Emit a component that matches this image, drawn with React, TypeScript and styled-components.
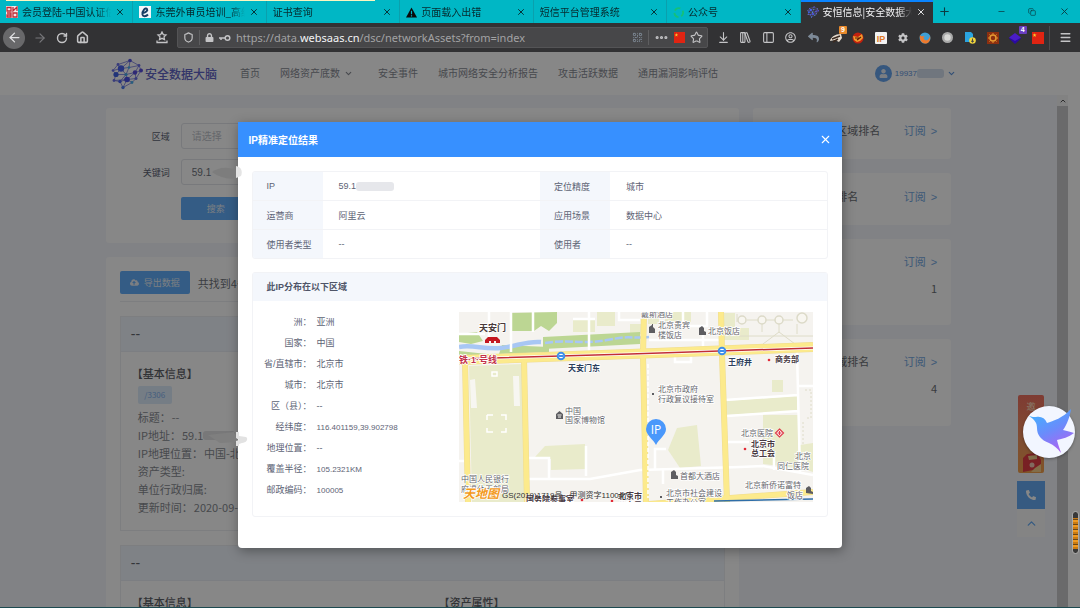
import React from "react";
import styled, { createGlobalStyle, css } from "styled-components";
import {
  ArrowLeft,
  ArrowRight,
  RotateCw,
  ArrowDownToLine,
  LibraryBig,
  PanelLeft,
  Menu,
  Star,
  Shield,
  X,
  Plus,
  Minus,
  Copy,
  ChevronDown,
  ChevronUp,
  House,
  QrCode,
  Ellipsis,
} from "lucide-react";
import {
  FaLock,
  FaPhoneAlt,
  FaCog,
  FaCloudUploadAlt,
  FaRegUserCircle,
  FaReply,
  FaUser,
} from "react-icons/fa";

const sans = `"Liberation Sans", "Noto Sans CJK SC", sans-serif`;
const cjk = `"Noto Sans CJK SC", sans-serif`;

const GlobalStyle = createGlobalStyle`
  * { box-sizing: border-box; }
  body { margin: 0; font-family: ${sans}; overflow: hidden; }
  button, input { font-family: inherit; }
  button { border: 0; padding: 0; background: none; color: inherit; cursor: pointer; }
  a { color: inherit; text-decoration: none; }
  svg { display: block; flex: none; }
`;

const Window = styled.div`
  display: flex;
  flex-direction: column;
  height: 100vh;
  overflow: hidden;
  border-bottom: 1px solid #1d4a50;
`;

/* ---------- browser chrome ---------- */

const TabStrip = styled.div`
  position: relative;
  display: grid;
  grid-template-columns: 1fr 147px;
  height: 23px;
  flex: none;
  background: #00b7c5;
`;

const NoticeEdge = styled.div`
  position: absolute;
  top: 0;
  left: 6px;
  width: 369px;
  height: 1px;
  background: #fbf6c0;
`;

const TabList = styled.div`
  display: flex;
`;

const Tab = styled.div<{ $active?: boolean }>`
  flex: 1;
  min-width: 0;
  display: flex;
  align-items: center;
  gap: 4px;
  padding: 1px 7px 0 6px;
  font: 10px/20px ${cjk};
  color: #06282c;
  border-right: 1px solid #0aa0ad;
  ${(p) =>
    p.$active &&
    css`
      background: #323234;
      color: #f2f2f4;
      border-right: 0;
      box-shadow: inset 0 2px 0 #0a84ff;
    `}
`;

const TabTitle = styled.span`
  flex: 1;
  min-width: 0;
  overflow: hidden;
  white-space: nowrap;
  mask-image: linear-gradient(90deg, #000 84%, transparent);
`;

const WindowButtons = styled.div`
  display: flex;
  align-items: center;
  justify-content: space-between;
  padding: 0 10px 0 5px;
  color: #0b3c42;
`;

const Toolbar = styled.div`
  display: flex;
  align-items: center;
  height: 29px;
  flex: none;
  background: #323234;
  color: #c4c4c6;
`;

const NavButtons = styled.div`
  display: flex;
  align-items: center;
  justify-content: space-between;
  width: 89px;
  padding-left: 3px;
`;

const BackButton = styled.button`
  display: grid;
  place-items: center;
  width: 22px;
  height: 22px;
  border-radius: 50%;
  background: #68686a;
  color: #e2e2e4;
`;

const PinSlot = styled.div`
  width: 88px;
  display: flex;
  justify-content: flex-end;
  padding-right: 9px;
`;

const AddressBox = styled.div`
  flex: 1;
  min-width: 0;
  display: flex;
  align-items: center;
  gap: 5px;
  height: 21px;
  padding: 0 4px 0 5px;
  background: #474749;
  border: 1px solid #545456;
  border-radius: 2px;
`;

const Divider = styled.i`
  width: 1px;
  height: 15px;
  background: #5e5e60;
`;

const Address = styled.div`
  flex: 1;
  min-width: 0;
  overflow: hidden;
  white-space: nowrap;
  font: 11px/18px "Noto Sans", sans-serif;
  color: #a2a2a4;
  b {
    font-weight: 400;
    color: #f4f4f6;
  }
`;

const Extensions = styled.div`
  display: flex;
  width: 341px;
  padding-left: 4px;
`;

const Extension = styled.button`
  position: relative;
  flex: 1;
  display: grid;
  place-items: center;
  height: 20px;
`;

const Badge = styled.span<{ $color: string }>`
  position: absolute;
  top: -2px;
  right: 0;
  padding: 0 2px;
  border-radius: 1px;
  font: bold 7px/8px "Liberation Sans", sans-serif;
  color: #fff;
  background: ${(p) => p.$color};
`;

const MenuSlot = styled.div`
  width: 31px;
  height: 24px;
  display: grid;
  place-items: center;
  border-left: 1px solid #4b4b4d;
`;

/* ---------- site ---------- */

const Page = styled.div`
  position: relative;
  flex: 1;
  min-height: 0;
  display: flex;
  flex-direction: column;
  overflow: hidden;
  background: #fff;
`;

const SiteHeader = styled.header`
  display: flex;
  align-items: center;
  height: 43px;
  flex: none;
  padding-left: 111px;
  padding-right: 124px;
`;

const Brand = styled.a`
  display: flex;
  align-items: center;
  gap: 2px;
  width: 129px;
  font: 500 12px/18px ${cjk};
  color: #6064c6;
`;

const SiteNav = styled.nav`
  flex: 1;
  display: flex;
  gap: 20px;
  font-size: 10px;
  line-height: 20px;
  white-space: nowrap;
  color: #888b94;
`;

const NavLink = styled.a`
  display: flex;
  align-items: center;
  gap: 4px;
  svg { margin-right: 5px; }
`;

const Account = styled.button`
  display: flex;
  align-items: center;
  gap: 3px;
  font-size: 8px;
  color: #5d95de;
`;

const Avatar = styled.span`
  display: grid;
  place-items: center;
  width: 17px;
  height: 17px;
  border-radius: 50%;
  background: #66a4ee;
  color: #e9eff6;
`;

const MaskBlock = styled.i<{ $w: number; $color?: string }>`
  width: ${(p) => p.$w}px;
  height: 9px;
  border-radius: 3px;
  background: ${(p) => p.$color ?? "#d4dfee"};
`;

const Scroller = styled.div`
  flex: 1;
  min-height: 0;
  display: flex;
  padding-right: 12px;
`;

const Content = styled.main`
  flex: 1;
  min-width: 0;
  display: grid;
  grid-template-columns: minmax(0, 1fr) 198px;
  align-items: start;
  gap: 14px;
  padding: 13px calc(10% - 1px) 0;
  overflow: hidden;
  background: #f3f5fc;
`;

const ScrollTrack = styled.div`
  width: 11px;
  display: flex;
  flex-direction: column;
  background: #c9c9cb;
`;

const ScrollArrow = styled.button`
  display: grid;
  place-items: center;
  height: 11px;
  background: #f6f6f6;
  color: #555;
`;

const Column = styled.div`
  display: flex;
  flex-direction: column;
  gap: 14px;
`;

const Card = styled.section<{ $pad?: string }>`
  background: #fff;
  border-radius: 3px;
  padding: ${(p) => p.$pad ?? "14px"};
`;

const SearchForm = styled.form`
  display: grid;
  grid-template-columns: 50px 240px;
  column-gap: 11px;
  row-gap: 10px;
  align-items: center;
  font-size: 9px;
  color: #5c6273;
  label { text-align: right; }
`;

const Field = styled.input`
  height: 26px;
  padding: 0 10px;
  border: 1px solid #e2e5ea;
  border-radius: 3px;
  background: #fff;
  font-size: 10px;
  color: #70747e;
  &::placeholder { color: #bfc3cb; }
`;

const PrimaryButton = styled.button<{ $start?: boolean }>`
  display: flex;
  align-items: center;
  justify-content: center;
  gap: 5px;
  width: 70px;
  height: 23px;
  border-radius: 2px;
  font-size: 9px;
  background: #62aefb;
  color: #e8eef6;
  ${(p) => p.$start && css`grid-column: 2; margin-top: 2px;`}
`;

const ResultBar = styled.div`
  display: flex;
  align-items: center;
  gap: 8px;
  padding-bottom: 7px;
  margin-bottom: 14px;
  border-bottom: 1px solid #eceef2;
  font: 11px/16px ${cjk};
  color: #70747c;
`;

const Asset = styled.article`
  border: 1px solid #eceef2;
  margin-bottom: 14px;
`;

const AssetHead = styled.h3`
  margin: 0;
  padding: 0 10px;
  font: 400 14px/34px ${sans};
  color: #63676f;
  background: #f0f5fd;
  border-bottom: 1px solid #eaeef5;
`;

const AssetBody = styled.div`
  display: grid;
  grid-template-columns: 7fr 6fr;
  padding: 12px 17px 14px;
  font: 11px/18px ${cjk};
  color: #888b92;
  h4 {
    margin: 0 0 4px -6px;
    font: 500 11px/18px ${cjk};
    color: #5d6067;
  }
`;

const Tag = styled.span`
  display: block;
  width: 34px;
  margin-bottom: 4px;
  border-radius: 2px;
  text-align: center;
  font-size: 8px;
  line-height: 18px;
  background: #deecfc;
  color: #82b2ee;
`;

const AssetLine = styled.div`
  display: flex;
  align-items: center;
  gap: 1px;
  height: 18px;
  white-space: nowrap;
`;

const RankHead = styled.div`
  display: flex;
  justify-content: space-between;
  align-items: center;
  font-size: 11px;
  line-height: 17px;
  color: #6c6f76;
  h3 {
    margin: 0;
    font: inherit;
  }
  a {
    display: flex;
    gap: 5px;
    color: #76a9e2;
  }
`;

const RankValue = styled.p`
  margin: 9px 0 0;
  text-align: right;
  font: 11px/17px ${cjk};
  color: #6c6f76;
`;

const SideTools = styled.div`
  position: absolute;
  right: 35px;
  top: 343px;
  width: 28px;
  display: flex;
  flex-direction: column;
`;

const Invite = styled.a`
  height: 78px;
  margin: 0 1px 8px;
  padding-top: 6px;
  border-radius: 2px;
  text-align: center;
  font-size: 9px;
  line-height: 12px;
  overflow: hidden;
  position: relative;
  color: #ffe3c8;
  background: linear-gradient(180deg, #ef7060, #f2915f 55%, #f2a04c);
  svg {
    position: absolute;
    bottom: 1px;
    left: 5px;
  }
`;

const ToolButton = styled.button<{ $solid?: boolean }>`
  display: grid;
  place-items: center;
  height: 28px;
  background: ${(p) => (p.$solid ? "#66abf4" : "#fafafa")};
  color: ${(p) => (p.$solid ? "#fff" : "#66abf4")};
`;

/* ---------- dialog ---------- */

const Backdrop = styled.div`
  position: absolute;
  inset: 0;
  background: rgba(0, 0, 0, 0.47);
`;

const Dialog = styled.div`
  position: relative;
  width: 56%;
  margin: 70px auto 0;
  border-radius: 1px 1px 4px 4px;
  background: #fff;
  box-shadow: 1px 3px 12px rgba(0, 0, 0, 0.35);
`;

const DialogHead = styled.div`
  display: flex;
  align-items: center;
  justify-content: space-between;
  height: 35px;
  padding: 0 10px 0 11px;
  color: #fff;
  background: #3790ff;
  h2 {
    margin: 0;
    font-size: 10px;
    font-weight: 700;
  }
`;

const DialogBody = styled.div`
  padding: 14px 14px 31px;
`;

const InfoTable = styled.table`
  width: 100%;
  table-layout: fixed;
  border-collapse: separate;
  border-spacing: 0;
  border: 1px solid #f2f3f6;
  border-radius: 3px;
  overflow: hidden;
  margin-bottom: 13px;
  font-size: 9px;
  color: #5d6375;
  th,
  td {
    height: 29px;
    padding: 0 0 0 16px;
    text-align: left;
    font-weight: 400;
    border-bottom: 1px solid #f2f3f6;
  }
  th {
    width: 70px;
    padding-left: 14px;
    background: #f4f7fc;
  }
  tr:last-child > * { border-bottom: 0; height: 28px; }
`;

const Inline = styled.span`
  display: flex;
  align-items: center;
`;

const Region = styled.section`
  border: 1px solid #f2f3f6;
  border-radius: 3px;
  h3 {
    margin: 0;
    padding-left: 14px;
    font-size: 9px;
    line-height: 28px;
    color: #4f5568;
    background: #f4f7fc;
  }
`;

const RegionBody = styled.div`
  display: grid;
  grid-template-columns: minmax(0, 1fr) 354px;
  padding: 11px 14px 14px 0;
`;

const Facts = styled.dl`
  display: grid;
  grid-template-columns: 59px 1fr;
  grid-auto-rows: 21px;
  align-content: start;
  column-gap: 5px;
  margin: 0;
  font-size: 9px;
  line-height: 21px;
  color: #5d6375;
  dt { text-align: right; white-space: nowrap; }
  dd { margin: 0; }
`;

const Figures = styled.span`
  font-size: 8px;
`;

const MapView = styled.svg`
  width: 354px;
  height: 190px;
  font-family: ${sans};
`;

const Smudge = styled.svg<{ $top: number }>`
  position: absolute;
  left: -30px;
  top: ${(p) => p.$top}px;
`;

const BirdButton = styled.button`
  position: absolute;
  right: 5px;
  top: 354px;
  width: 52px;
  height: 52px;
  border-radius: 50%;
  background: #f2f6ff;
  box-shadow: 0 1px 3px rgba(0, 0, 0, 0.35);
`;

const Meter = styled.div`
  position: absolute;
  right: 1px;
  top: 459px;
  width: 7px;
  height: 43px;
  border: 1px solid #aaa;
  border-radius: 4px;
  background: linear-gradient(#383838 6px, transparent 6px 37px, #383838 37px),
    repeating-linear-gradient(#c97a12 0 2px, #6b4716 2px 3px, #f09a22 3px 5px);
`;

const BrainIcon = ({ size = 32 }: { size?: number }) => {
  const dots: [number, number, number, string][] = [
    [7, 6, 1.4, "#6b70e8"], [19, 2, 1.8, "#5558e0"], [28, 7, 1.4, "#6b70e8"],
    [10, 10, 3.2, "#4a62f0"], [18, 9, 1.3, "#4ab0ef"], [30, 12, 2, "#5a4ede"],
    [2, 12, 1.3, "#6b70e8"], [5, 16, 2.6, "#3f62e4"], [15, 16, 1.6, "#49a8e8"],
    [24, 14, 2.2, "#5a4ede"], [3, 22, 1.4, "#6b70e8"], [9, 23, 1.7, "#4a62f0"],
    [16, 21, 2.8, "#4a50e4"], [25, 20, 1.5, "#6b70e8"], [21, 24, 1.4, "#4ab0ef"], [12, 29, 1.7, "#4f7cf0"],
  ];
  return (
    <svg width={size} height={size} viewBox="0 0 32 31">
      <path
        d="M7 6L19 2L28 7L30 12L25 20L21 24L12 29L9 23L3 22L5 16L2 12L7 6L10 10L19 2L18 9L28 7L24 14L30 12M10 10L5 16L15 16L18 9L10 10L15 16L9 23L16 21L24 14L15 16L16 21L25 20L24 14M3 22L16 21L12 29M16 21L21 24M2 12L10 10"
        fill="none"
        stroke="#7578dc"
        strokeWidth=".8"
      />
      {dots.map(([x, y, r, c], i) => (
        <circle key={i} cx={x} cy={y} r={r} fill={c} />
      ))}
    </svg>
  );
};

const FlagIcon = ({ size = 11 }: { size?: number }) => (
  <svg width={size} height={size} viewBox="0 0 12 12">
    <path d="M0 0H12V12H0Z" fill="#e02412" />
    <path d="M2.6 1.2L3.1 2.6H4.6L3.4 3.5L3.8 5L2.6 4.1L1.4 5L1.8 3.5L.6 2.6H2.1Z" fill="#f8d032" />
  </svg>
);

const KeyIcon = () => (
  <svg width="12" height="8" viewBox="0 0 12 8" fill="none" stroke="currentColor" strokeWidth="1.500">
    <path d="M0 4H6M2 4V6" />
    <circle cx="8.500" cy="4" r="2.300" />
  </svg>
);

const BookmarkTray = () => (
  <svg width="12" height="13" viewBox="0 0 12 13" fill="none" stroke="currentColor" strokeWidth="1.3">
    <path d="M6 1L7.3 3.6L10 4L8 5.900L8.500 8.500L6 7.300L3.500 8.500L4 5.900L2 4L4.700 3.600ZM1 9.500V11.500H11V9.500" />
  </svg>
);

const BirdIcon = () => (
  <svg width="52" height="52" viewBox="0 0 52 52">
    <defs>
      <linearGradient id="bird" x1=".2" y1="0" x2=".7" y2="1">
        <stop offset="0" stopColor="#3fb2ff" />
        <stop offset=".5" stopColor="#6a8cfb" />
        <stop offset="1" stopColor="#b35ff2" />
      </linearGradient>
    </defs>
    <path
      fill="url(#bird)"
      d="M6 10C9 11 11 11 13 11C18 10 22 12 24 17C30 15 40 12 48 3C47 10 44 19 40 24C44 25 48 26 51 27C46 31 39 33 34 34C35 39 37 43 38 47C34 42 31 39 26 37C18 34 14 29 14 22C14 17 12 14 6 10Z"
    />
  </svg>
);

type Label = { x: number; y: number; t: string; s?: number; c?: string; b?: boolean };

const mapLabels: Label[] = [
  { x: 20, y: 19, t: "天安门", s: 9, c: "#4a3b3b", b: true },
  { x: 0, y: 51, t: "铁·1·号线", s: 9, c: "#c4314a", b: true },
  { x: 109, y: 59, t: "天安门东", c: "#2d3f5c", b: true },
  { x: 106, y: 102, t: "中国" },
  { x: 106, y: 111, t: "国家博物馆" },
  { x: 2, y: 170, t: "中国人民银行" },
  { x: 2, y: 180, t: "府退休干部局" },
  { x: 182, y: 5, t: "戴斯酒店" },
  { x: 199, y: 16, t: "北京贵宾" },
  { x: 199, y: 26, t: "楼饭店" },
  { x: 249, y: 22, t: "北京饭店" },
  { x: 269, y: 53, t: "王府井", c: "#2d3f5c", b: true },
  { x: 316, y: 50, t: "商务部", c: "#493a43", b: true },
  { x: 199, y: 80, t: "北京市政府" },
  { x: 199, y: 90, t: "行政复议接待室" },
  { x: 282, y: 124, t: "北京医院" },
  { x: 292, y: 135, t: "北京市", c: "#493a43", b: true },
  { x: 292, y: 144, t: "总工会", c: "#493a43", b: true },
  { x: 336, y: 147, t: "北京" },
  { x: 318, y: 157, t: "同仁医院" },
  { x: 221, y: 167, t: "首都大酒店" },
  { x: 286, y: 176, t: "北京新侨诺富特" },
  { x: 328, y: 186, t: "饭店" },
  { x: 207, y: 184, t: "北京市社会建设" },
  { x: 207, y: 193, t: "工作办公室" },
  { x: 67, y: 190, t: "国务院参事室", c: "#493a43", b: true },
  { x: 159, y: 187, t: "北京市", c: "#493a43", b: true },
  { x: 159, y: 196, t: "公安局", c: "#493a43", b: true },
];

const CityMap = () => (
  <MapView viewBox="0 0 354 190" role="img" aria-label="地图">
    <rect width="354" height="190" fill="#f5f3ef" />
    <g fill="#e9ebcb">
      <path d="M10 54L64 52L66 190L13 190Z" />
      <path d="M86 134L126 132V157L92 158V147L76 145Z" />
      <path d="M266 89L338 84V99L267 103Z" />
      <path d="M304 103H339V156L304 152Z" />
      <path d="M313 68H324V80H313ZM341 133L354 131V160L341 156Z" />
      <path d="M218 116L238 113L242 154L221 156L209 138Z" />
      <path d="M264 1H276V16H290V28H264ZM114 6H136V20H114ZM171 12H183V22H171Z" />
      <path d="M189 2H200V12H189ZM206 0H232V10H206ZM138 0H156V14H138Z" />
    </g>
    <g fill="#bcd693">
      <path d="M51 1L98 0V11L90 19L82 14L75 19H51ZM0 22L18 20L24 29L12 32L0 30ZM43 33L90 35V40L40 42ZM84 25L181 20V32L84 37ZM0 39L28 42L24 45H0Z" />
    </g>
    <g fill="#f7f6f1">
      <path d="M11 68L16 67L18 96H12ZM54 64H60L61 94H55Z" />
    </g>
    <path d="M28 103H34M42 103H47V108M47 116V120H42M34 120H28V116M28 108V103M33 60H38V64H33Z" fill="none" stroke="#fff" strokeWidth="1.500" />
    <path d="M0 35C14 32 25 38 42 36S66 29 82 30" fill="none" stroke="#a8c7f4" strokeWidth="4.500" />
    <path d="M86 31C110 27 122 33 148 28S170 27 190 25" fill="none" stroke="#a8c7f4" strokeWidth="2.500" strokeDasharray="8 2" />
    <g fill="none" stroke="#fff" strokeWidth="2.500">
      <path d="M69 146H90V167M69 167H131L181 158L281 155L304 154L354 163M127 134V164M0 149H8M266 88L339 83M268 104L339 99M338 40L341 160M338 74H354M268 130H290M315 140V158M114 7H136M130 0V44M160 0V8H181M52 0V40M74 0V20M30 0V26M0 22H26" />
      <path d="M207 137H196V158M204 158V172M224 0V14H248V0M190 28H260M216 43V50H232V42M244 35V22" />
    </g>
    <g fill="none" stroke="#dedcc8" strokeWidth="1">
      <path d="M288 8H299M306 8H316M324 8H334M303 12V20M320 12V20L304 32M320 20L336 32M338 12V22M280 24H354M278 10V2" />
      <path d="M346 78H352V106H346M344 110V132" strokeDasharray="2 2" />
    </g>
    <g fill="#f8f6f0" stroke="#dcdac8" strokeWidth="1.500">
      <circle cx="283" cy="8" r="4" />
      <circle cx="303" cy="8" r="4" />
      <circle cx="320" cy="8" r="4" />
      <circle cx="343" cy="6" r="5" />
    </g>
    <g fill="none" stroke="#efdc90" strokeWidth="6">
      <path d="M6 48L9 190M65 46L68 190M185 0L184 43L187 190M262 0L263 42L268 190" />
      <path d="M0 48L171 42L354 35" strokeWidth="10" />
      <path d="M190 192L354 180" strokeWidth="6" />
    </g>
    <g fill="none" stroke="#fcea8c" strokeWidth="5">
      <path d="M6 48L9 190M65 46L68 190M185 0L184 43L187 190M262 0L263 42L268 190" />
      <path d="M0 48L171 42L354 35" strokeWidth="9" />
      <path d="M190 192L354 180" strokeWidth="5" />
    </g>
    <path d="M189 52V186" stroke="#fff" strokeWidth="1.500" strokeDasharray="4 2" />
    <path d="M0 47L171 42L354 36" fill="none" stroke="#fff" strokeWidth="3" />
    <path d="M0 47L171 42L354 36" fill="none" stroke="#c22e35" strokeWidth="1.500" />
    <path d="M255 189L354 187" stroke="#2f6ea8" strokeWidth="1.500" />
    <g fill="#fff" stroke="#3e8eea" strokeWidth="2">
      <circle cx="102" cy="44" r="3.300" />
      <circle cx="263" cy="39" r="3.300" />
    </g>
    <path d="M100 44H104M261 39H265" stroke="#3e8eea" strokeWidth="2" />
    <path d="M26 31V28L29 25H38L41 28V31H37V29H35V31H32V29H30V31Z" fill="#c4161f" />
    <g fill="#5d5d61">
      <path d="M97 102L100.500 99L104 102V107H97ZM190 21V15L193 13V12H194V15L196 17V21ZM240 23V16L243 14L245 16V19L247 20V23ZM212 167V160L215 158L217 160V163L219 164V167ZM347 181V176L350 174L352 176V179L354 180V182Z" />
      <rect x="193" y="81" width="2" height="2" />
      <rect x="201" y="184" width="2" height="2" />
    </g>
    <path d="M98.500 103H102.500M99 105H102" stroke="#f5f3ef" />
    <g fill="#e22b38">
      <circle cx="310" cy="48" r="1.300" />
      <circle cx="286" cy="137" r="1.300" />
      <circle cx="123" cy="188" r="1.300" />
      <circle cx="153" cy="189" r="1.300" />
    </g>
    <path d="M320.500 117L324.500 121L320.500 125L316.500 121Z" fill="#fff" stroke="#df3a49" strokeWidth="1.200" />
    <path d="M318.500 121H322.500M320.500 119V123" stroke="#df3a49" strokeWidth="1.200" />
    <g stroke="#fff" strokeWidth="1.500">
      {mapLabels.map((l) => (
        <text
          key={l.t + l.x + l.y}
          x={l.x}
          y={l.y}
          fontSize={l.s ?? 8}
          fill={l.c ?? "#66666c"}
          fontWeight={l.b ? 700 : 400}
          paintOrder="stroke"
        >
          {l.t}
        </text>
      ))}
      <text x="4" y="186" fontSize="12" fontWeight="700" fontStyle="italic" fill="#f39a1c" paintOrder="stroke">
        天地图
      </text>
    </g>
    <text x="43" y="186" fontSize="8" fill="#333">
      GS(2019)1719号 - 甲测资字1100471
    </text>
    <path d="M197 133C194 127 187 123 187 117A10 10 0 0 1 207 117C207 123 200 127 197 133Z" fill="#4a98fb" />
    <text x="197" y="122" fontSize="12" fill="#fff" textAnchor="middle" fontFamily="Open Sans, sans-serif">
      IP
    </text>
  </MapView>
);

const tabs: { title: string; icon?: React.ReactNode; active?: boolean }[] = [
  {
    title: "会员登陆-中国认证信息网",
    icon: (
      <svg width="12" height="12" viewBox="0 0 12 12">
        <path d="M0 0H12V12H0Z" fill="#f4e8e8" />
        <path d="M1 1.500H5V5H1ZM7 1V5L11 1V5M1 7H5V11H1V9H5M7 7H11V11H7Z" fill="none" stroke="#c22a35" strokeWidth="1.300" />
      </svg>
    ),
  },
  {
    title: "东莞外审员培训_高级审核员",
    icon: (
      <svg width="12" height="12" viewBox="0 0 12 12">
        <path d="M0 0H12V12H0Z" fill="#f3f6fa" />
        <path d="M3 7C7 7 9 4.500 8 3C6.500 1 3 5 3.500 8.500C4 11 7 10.500 9 8.500" fill="none" stroke="#173f66" strokeWidth="2" />
      </svg>
    ),
  },
  { title: "证书查询" },
  {
    title: "页面载入出错",
    icon: (
      <svg width="11" height="11" viewBox="0 0 12 12">
        <path d="M6 .500L12 11.500H0Z" fill="#0a0a0a" />
        <path d="M6 4V8M6 9V10.300" stroke="#00b7c5" strokeWidth="1.300" />
      </svg>
    ),
  },
  { title: "短信平台管理系统" },
  {
    title: "公众号",
    icon: (
      <svg width="11" height="11" viewBox="0 0 12 12" fill="none" stroke="#15c079" strokeWidth="2">
        <path d="M2 4A5 5 0 0 1 8 1.500M10.500 4A5 5 0 0 1 9 10M6 11A5 5 0 0 1 1.500 6.500" />
      </svg>
    ),
  },
  { title: "安恒信息|安全数据大脑", icon: <BrainIcon size={12} />, active: true },
];

const assetLines: [string, React.ReactNode][] = [
  ["标题：", "--"],
  ["IP地址：", <Inline key="ip">59.1<MaskBlock $w={32} $color="#e2e2e4" /></Inline>],
  ["IP地理位置：", "中国-北京"],
  ["资产类型:", ""],
  ["单位行政归属:", ""],
  ["更新时间：", "2020-09-12"],
];

const ranks: { title: string; value?: string; pad: string }[] = [
  { title: "易受攻击资产区域排名", pad: "15px 14px 19px 17px" },
  { title: "行业资产类型排名", pad: "16px 14px 19px 17px" },
  { title: "区域漏洞排名", value: "1", pad: "15px 14px 28px 17px" },
  { title: "漏洞影响面区域排名", value: "4", pad: "15px 14px 29px 17px" },
];

const facts: [string, React.ReactNode][] = [
  ["洲：", "亚洲"],
  ["国家：", "中国"],
  ["省/直辖市：", "北京市"],
  ["城市：", "北京市"],
  ["区（县）：", "--"],
  ["经纬度：", <Figures key="f">116.401159,39.902798</Figures>],
  ["地理位置：", "--"],
  ["覆盖半径：", <Figures key="f">105.2321KM</Figures>],
  ["邮政编码：", <Figures key="f">100005</Figures>],
];

const AssetCard = () => (
  <Asset>
    <AssetHead>--</AssetHead>
    <AssetBody>
      <div>
        <h4>【基本信息】</h4>
        <Tag>/3306</Tag>
        {assetLines.map(([k, v]) => (
          <AssetLine key={k}>
            {k}
            <span>{v}</span>
          </AssetLine>
        ))}
      </div>
      <div>
        <h4>【资产属性】</h4>
      </div>
    </AssetBody>
  </Asset>
);

const BrowserChrome = () => (
  <>
    <TabStrip>
      <TabList>
        {tabs.map((t) => (
          <Tab key={t.title} $active={t.active}>
            {t.icon}
            <TabTitle>{t.title}</TabTitle>
            <X size={10} strokeWidth={2.2} />
          </Tab>
        ))}
      </TabList>
      <WindowButtons>
        <Plus size={13} />
        <span />
        <Minus size={9} />
        <Copy size={8} />
        <X size={11} />
      </WindowButtons>
      <NoticeEdge />
    </TabStrip>
    <Toolbar>
      <NavButtons>
        <BackButton aria-label="后退"><ArrowLeft size={15} /></BackButton>
        <ArrowRight size={14} color="#77777a" />
        <RotateCw size={12} strokeWidth={2.800} />
        <House size={13} strokeWidth={2.800} />
      </NavButtons>
      <PinSlot><BookmarkTray /></PinSlot>
      <AddressBox>
        <Shield size={11} strokeWidth={2.500} />
        <Divider />
        <FaLock size={9} />
        <KeyIcon />
        <Address role="textbox" aria-label="地址栏">
          https://data.<b>websaas.cn</b>/dsc/networkAssets?from=index
        </Address>
        <QrCode size={11} color="#7f8a96" />
        <Divider />
        <Ellipsis size={15} strokeWidth={3} />
        <FlagIcon />
        <Star size={13} />
      </AddressBox>
      <Extensions>
        <Extension aria-label="下载"><ArrowDownToLine size={13} /></Extension>
        <Extension aria-label="书库"><LibraryBig size={13} /></Extension>
        <Extension aria-label="侧栏"><PanelLeft size={13} /></Extension>
        <Extension aria-label="账户"><FaRegUserCircle size={11} /></Extension>
        <Extension aria-label="返回"><FaReply size={11} color="#7d8a98" /></Extension>
        <Extension aria-label="拦截">
          <svg width="12" height="10" viewBox="0 0 12 10">
            <path d="M0 8C1 4 5 1 11 1L12 5L9 9L5 7Z" fill="#e8ddd0" />
            <path d="M2 6L10 3M3 9L8 6" stroke="#3b2a20" strokeWidth="1.500" />
          </svg>
          <Badge $color="#e8892b">9</Badge>
        </Extension>
        <Extension aria-label="代理">
          <svg width="12" height="12" viewBox="0 0 12 12">
            <circle cx="6" cy="6" r="5.500" fill="#c2210e" />
            <path d="M1 4L6 5L10 2L11 6L8 9L5 10L2 8Z" fill="#f29b2d" />
            <path d="M3 6H8M5 8L9 5" stroke="#5c1c0a" strokeWidth="1.200" />
          </svg>
        </Extension>
        <Extension aria-label="IP">
          <svg width="12" height="12" viewBox="0 0 12 12">
            <rect width="12" height="12" rx="1" fill="#f2f2f2" />
            <text x="6" y="9.500" fontSize="9" fontWeight="700" fill="#e07a28" textAnchor="middle" fontFamily="Liberation Sans">IP</text>
          </svg>
        </Extension>
        <Extension aria-label="设置"><FaCog size={10} /></Extension>
        <Extension aria-label="火狐">
          <svg width="12" height="12" viewBox="0 0 12 12">
            <circle cx="6" cy="6" r="5.500" fill="#3f9fd4" />
            <path d="M1 3C0 8 3 12 7 11.500C10 11 12 8 11 4C10 8 8 9 6 8C4 7 4 5 6 4C4 4 2 5 1 3Z" fill="#ee7a2e" />
          </svg>
        </Extension>
        <Extension aria-label="球">
          <svg width="11" height="11" viewBox="0 0 12 12">
            <circle cx="6" cy="6" r="6" fill="#a9a9a9" />
            <circle cx="6" cy="6" r="3.500" fill="#d8d8d6" />
          </svg>
        </Extension>
        <Extension aria-label="文档">
          <svg width="12" height="12" viewBox="0 0 12 12">
            <path d="M1 0H7L9 2V10H1Z" fill="#2aa4e0" />
            <circle cx="8.500" cy="8.500" r="3.300" fill="#f0d43c" />
            <path d="M8.500 6.500V10M7 8.800L8.500 10.200L10 8.800" stroke="#444" fill="none" />
          </svg>
        </Extension>
        <Extension aria-label="工具">
          <svg width="12" height="12" viewBox="0 0 12 12">
            <rect width="12" height="12" fill="#8c2f10" />
            <circle cx="6" cy="6" r="3" fill="none" stroke="#e59a32" strokeWidth="1.500" />
            <path d="M6 1V2.500M6 9.500V11M1 6H2.500M9.500 6H11M2.500 2.500L3.500 3.500M8.500 8.500L9.500 9.500M9.500 2.500L8.500 3.500M2.500 9.500L3.500 8.500" stroke="#e59a32" />
          </svg>
        </Extension>
        <Extension aria-label="图层">
          <svg width="12" height="12" viewBox="0 0 12 12">
            <path d="M6 2L12 6.500L6 12L0 6.500Z" fill="#2a0aa2" />
            <path d="M6 1L12 5.500L6 9L0 5.500Z" fill="#4a1cc8" />
          </svg>
          <Badge $color="#6a3ec0">4</Badge>
        </Extension>
        <Extension aria-label="旗"><FlagIcon size={12} /></Extension>
      </Extensions>
      <MenuSlot><Menu size={13} strokeWidth={2.500} /></MenuSlot>
    </Toolbar>
  </>
);

export default function App() {
  return (
    <Window>
      <GlobalStyle />
      <BrowserChrome />
      <Page>
        <SiteHeader>
          <Brand href="#"><BrainIcon />安全数据大脑</Brand>
          <SiteNav>
            <NavLink href="#">首页</NavLink>
            <NavLink href="#">网络资产底数<ChevronDown size={9} strokeWidth={3} /></NavLink>
            <NavLink href="#">安全事件</NavLink>
            <NavLink href="#">城市网络安全分析报告</NavLink>
            <NavLink href="#">攻击活跃数据</NavLink>
            <NavLink href="#">通用漏洞影响评估</NavLink>
          </SiteNav>
          <Account>
            <Avatar><FaUser size={9} /></Avatar>
            <Inline>19937<MaskBlock $w={27} /></Inline>
            <ChevronDown size={9} strokeWidth={3} />
          </Account>
        </SiteHeader>

        <Scroller>
          <Content>
            <Column>
              <Card $pad="15px 14px 23px">
                <SearchForm>
                  <label htmlFor="area">区域</label>
                  <Field id="area" placeholder="请选择" />
                  <label htmlFor="keyword">关键词</label>
                  <Field id="keyword" defaultValue="59.1" />
                  <PrimaryButton type="button" $start>搜索</PrimaryButton>
                </SearchForm>
              </Card>
              <Card>
                <ResultBar>
                  <PrimaryButton><FaCloudUploadAlt size={9} />导出数据</PrimaryButton>
                  共找到4条
                </ResultBar>
                <AssetCard />
                <AssetCard />
              </Card>
            </Column>
            <Column>
              {ranks.map((r) => (
                <Card key={r.title} $pad={r.pad}>
                  <RankHead>
                    <h3>{r.title}</h3>
                    <a href="#">订阅<span>&gt;</span></a>
                  </RankHead>
                  {r.value && <RankValue>{r.value}</RankValue>}
                </Card>
              ))}
            </Column>
          </Content>
          <ScrollTrack>
            <ScrollArrow aria-label="向上滚动"><ChevronUp size={8} strokeWidth={3} /></ScrollArrow>
          </ScrollTrack>
        </Scroller>

        <SideTools>
          <Invite href="#">
            邀
            <svg width="18" height="20" viewBox="0 0 18 20">
              <path d="M4 2L14 1L18 8V18H10L0 20V6Z" fill="#e23e45" />
              <path d="M5 4L14 3V7L6 8ZM12 16L18 12V20H8Z" fill="#f6cf8a" />
              <circle cx="9" cy="13" r="2.500" fill="#f4c8b4" />
            </svg>
          </Invite>
          <ToolButton $solid aria-label="电话"><FaPhoneAlt size={10} /></ToolButton>
          <ToolButton aria-label="返回顶部"><ChevronUp size={13} strokeWidth={2.500} /></ToolButton>
        </SideTools>

        <Backdrop>
          <Dialog role="dialog" aria-labelledby="dialog-title">
            <DialogHead>
              <h2 id="dialog-title">IP精准定位结果</h2>
              <button aria-label="关闭"><X size={13} /></button>
            </DialogHead>
            <DialogBody>
              <InfoTable>
                <tbody>
                  <tr>
                    <th scope="row">IP</th>
                    <td><Inline>59.1<MaskBlock $w={38} $color="#e6e7eb" /></Inline></td>
                    <th scope="row">定位精度</th>
                    <td>城市</td>
                  </tr>
                  <tr>
                    <th scope="row">运营商</th>
                    <td>阿里云</td>
                    <th scope="row">应用场景</th>
                    <td>数据中心</td>
                  </tr>
                  <tr>
                    <th scope="row">使用者类型</th>
                    <td>--</td>
                    <th scope="row">使用者</th>
                    <td>--</td>
                  </tr>
                </tbody>
              </InfoTable>
              <Region>
                <h3>此IP分布在以下区域</h3>
                <RegionBody>
                  <Facts>
                    {facts.map(([k, v]) => (
                      <React.Fragment key={k}>
                        <dt>{k}</dt>
                        <dd>{v}</dd>
                      </React.Fragment>
                    ))}
                  </Facts>
                  <CityMap />
                </RegionBody>
              </Region>
            </DialogBody>
            <Smudge $top={42} width="36" height="18" viewBox="0 0 36 18">
              <path d="M4 8C10 4 18 2 28 6L30 14C22 16 12 14 4 8Z" fill="#7d7d7d" />
              <path d="M28 2C33 3 35 7 33 12L28 14Z" fill="#e4e4e4" />
            </Smudge>
            <Smudge $top={306} width="42" height="20" viewBox="0 0 42 20">
              <path d="M0 7L26 4L30 14L12 15Z" fill="#7f7f7f" />
              <path d="M28 4H31V8L38 9C41 11 38 15 34 15L31 16V18H28V13L31 12L28 10Z" fill="#e2e2e2" />
            </Smudge>
          </Dialog>
        </Backdrop>

        <BirdButton aria-label="助手"><BirdIcon /></BirdButton>
        <Meter />
      </Page>
    </Window>
  );
}
